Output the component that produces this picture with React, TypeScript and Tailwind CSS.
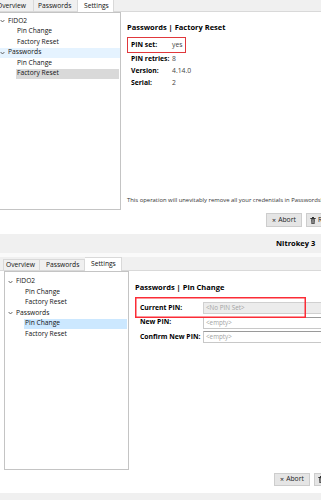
import React from "react";

const FONT: React.CSSProperties = { fontFamily: "'Open Sans', 'Noto Sans', sans-serif" };

function Chevron() {
  return (
    <svg width="5" height="4" viewBox="0 0 5 4" className="shrink-0">
      <polyline points="0.6,1 2.5,3 4.4,1" fill="none" stroke="#444" strokeWidth="0.8" />
    </svg>
  );
}

function Trash() {
  return (
    <svg width="6" height="7" viewBox="0 0 6 7" className="shrink-0">
      <rect x="0.3" y="1" width="5.4" height="1" fill="#333" />
      <rect x="2" y="0" width="2" height="1" fill="#333" />
      <path d="M1 2.3 H5 L4.6 7 H1.4 Z" fill="#444" />
      <line x1="2.3" y1="3" x2="2.3" y2="6.3" stroke="#ddd" strokeWidth="0.5" />
      <line x1="3.7" y1="3" x2="3.7" y2="6.3" stroke="#ddd" strokeWidth="0.5" />
    </svg>
  );
}

type Hl = "none" | "hover" | "gray" | "blue";

function Row({ label, indent, chevron, hl }: { label: string; indent: boolean; chevron: boolean; hl: Hl }) {
  const bg =
    hl === "hover" ? "bg-[#e5f3ff]" : hl === "gray" ? "bg-[#d9d9d9]" : hl === "blue" ? "bg-[#cce8ff]" : "";
  if (indent) {
    return (
      <div className="h-[10.5px] flex items-center pl-[19px] pr-[1px]">
        <div className={`h-full flex-1 flex items-center pl-[1px] ${bg}`}>{label}</div>
      </div>
    );
  }
  return (
    <div className={`h-[10.5px] flex items-center ${bg}`}>
      <div className="w-[11px] flex justify-center">{chevron ? <Chevron /> : null}</div>
      <span>{label}</span>
    </div>
  );
}

function Tree({ hl }: { hl: Record<number, Hl> }) {
  const rows = [
    { label: "FIDO2", indent: false },
    { label: "Pin Change", indent: true },
    { label: "Factory Reset", indent: true },
    { label: "Passwords", indent: false },
    { label: "Pin Change", indent: true },
    { label: "Factory Reset", indent: true },
  ];
  return (
    <>
      {rows.map((r, i) => (
        <Row key={i} label={r.label} indent={r.indent} chevron={!r.indent} hl={hl[i] ?? "none"} />
      ))}
    </>
  );
}

function Buttons({ h }: { h: string }) {
  return (
    <div className="flex gap-[4px] pl-[139px] text-[6.8px] text-[#222]">
      <div className={`${h} w-[36px] shrink-0 flex items-center justify-center gap-[2px] bg-[#e5e5e5] border border-[#cdcdcd]`}>
        <span className="text-[7px] leading-none">×</span>
        <span>Abort</span>
      </div>
      <div className={`${h} w-[50px] shrink-0 flex items-center pl-[3px] gap-[2px] bg-[#e5e5e5] border border-[#cdcdcd]`}>
        <Trash />
        <span>Reset</span>
      </div>
    </div>
  );
}

export default function App() {
  return (
    <div className="w-[321px] h-[500px] overflow-hidden bg-white text-[#111] whitespace-nowrap" style={FONT}>
      {/* ===== Top window ===== */}
      <div className="h-[234px] flex flex-col">
        <div className="h-[12px] bg-[#f0f0f0] border-b border-[#d9d9d9] flex items-start text-[6.7px] leading-none shrink-0">
          <div className="ml-[-5px] w-[39px] h-[11px] pl-[2px] pt-[1px] flex items-center border-r border-[#d9d9d9]">Overview</div>
          <div className="w-[43px] h-[11px] pl-[4px] pt-[1px] flex items-center">Passwords</div>
          <div className="w-[37px] h-[12px] pl-[6px] flex items-center bg-white border-l border-r border-[#d9d9d9]">Settings</div>
        </div>
        <div className="flex h-[222px]">
          <div className="ml-[-4px] w-[125px] h-[198px] shrink-0 border border-[#c4c4c4] bg-white pt-[3px] text-[6.7px] leading-none">
            <Tree hl={{ 3: "hover", 5: "gray" }} />
          </div>
          <div className="flex-1 min-w-0 flex flex-col pl-[6px]">
            <div className="mt-[10px] h-[10px] leading-[10px] font-bold text-[7.5px] text-black">Passwords | Factory Reset</div>
            <div className="mt-[5px] w-[59px] h-[16px] border border-[#e0383c] flex items-center pl-[3px] pt-[1px] text-[6.8px]">
              <span className="w-[41px] font-bold text-black">PIN set:</span>
              <span className="text-[#444]">yes</span>
            </div>
            {[
              ["PIN retries:", "8"],
              ["Version:", "4.14.0"],
              ["Serial:", "2"],
            ].map(([k, v]) => (
              <div key={k} className="h-[12px] flex items-center pl-[4px] text-[6.8px]">
                <span className="w-[41px] font-bold text-black">{k}</span>
                <span className="text-[#444]">{v}</span>
              </div>
            ))}
            <div className="mt-auto h-[8px] leading-[8px] text-[5.9px] text-[#333]">
              This operation will unevitably remove all your credentials in Passwords!
            </div>
            <div className="mt-[9px] mb-[7px]">
              <Buttons h="h-[14px]" />
            </div>
          </div>
        </div>
      </div>

      {/* ===== Bottom window ===== */}
      <div className="h-[19px] bg-[#f0f0f0] pl-[276px] flex items-center font-bold text-[7.5px] text-black">Nitrokey 3</div>
      <div className="h-[4px] bg-[#fafafa]" />
      <div className="h-[14px] bg-[#f0f0f0] border-b border-[#d9d9d9] flex items-end text-[6.7px] leading-none">
        <div className="ml-[3px] w-[37px] h-[11px] pl-[2px] flex items-center border-l border-r border-t border-[#d9d9d9]">Overview</div>
        <div className="w-[45px] h-[11px] pl-[6px] flex items-center border-r border-t border-[#d9d9d9]">Passwords</div>
        <div className="w-[37px] h-[14px] -mb-px pl-[6px] flex items-center bg-white border-r border-t border-[#d9d9d9]">Settings</div>
      </div>
      <div className="flex h-[222px]">
        <div className="ml-[4px] w-[125px] h-[199px] shrink-0 border border-[#c4c4c4] bg-white pt-[4.5px] text-[6.7px] leading-none">
          <Tree hl={{ 4: "blue" }} />
        </div>
        <div className="flex-1 min-w-0 flex flex-col pl-[6px]">
          <div className="mt-[11px] h-[10px] leading-[10px] font-bold text-[7.5px] text-black">Passwords | Pin Change</div>
          <div className="relative mt-[9px] flex flex-col gap-[0.5px] text-[6.8px]">
            {[
              ["Current PIN:", "<No PIN Set>", true],
              ["New PIN:", "<empty>", false],
              ["Confirm New PIN:", "<empty>", false],
            ].map(([k, v, dis]) => (
              <div key={k as string} className="h-[14px] flex items-center pl-[5px]">
                <span className="w-[63px] shrink-0 font-bold text-black">{k}</span>
                <div
                  className={`w-[140px] h-[12px] shrink-0 flex items-center pl-[2px] border text-[6.3px] text-[#a3a3a3] ${
                    dis ? "bg-[#ececec] border-[#d0d0d0]" : "bg-white border-[#c8c8c8] border-t-[#9a9a9a]"
                  }`}
                >
                  {v}
                </div>
              </div>
            ))}
            <div className="absolute left-0 top-[-4px] w-[171px] h-[21px] ring-[1.5px] ring-inset ring-red-500 pointer-events-none" />
          </div>
          <div className="mt-auto mb-[7px]">
            <Buttons h="h-[13px]" />
          </div>
        </div>
      </div>
      <div className="h-[7px] bg-[#f0f0f0]" />
    </div>
  );
}
